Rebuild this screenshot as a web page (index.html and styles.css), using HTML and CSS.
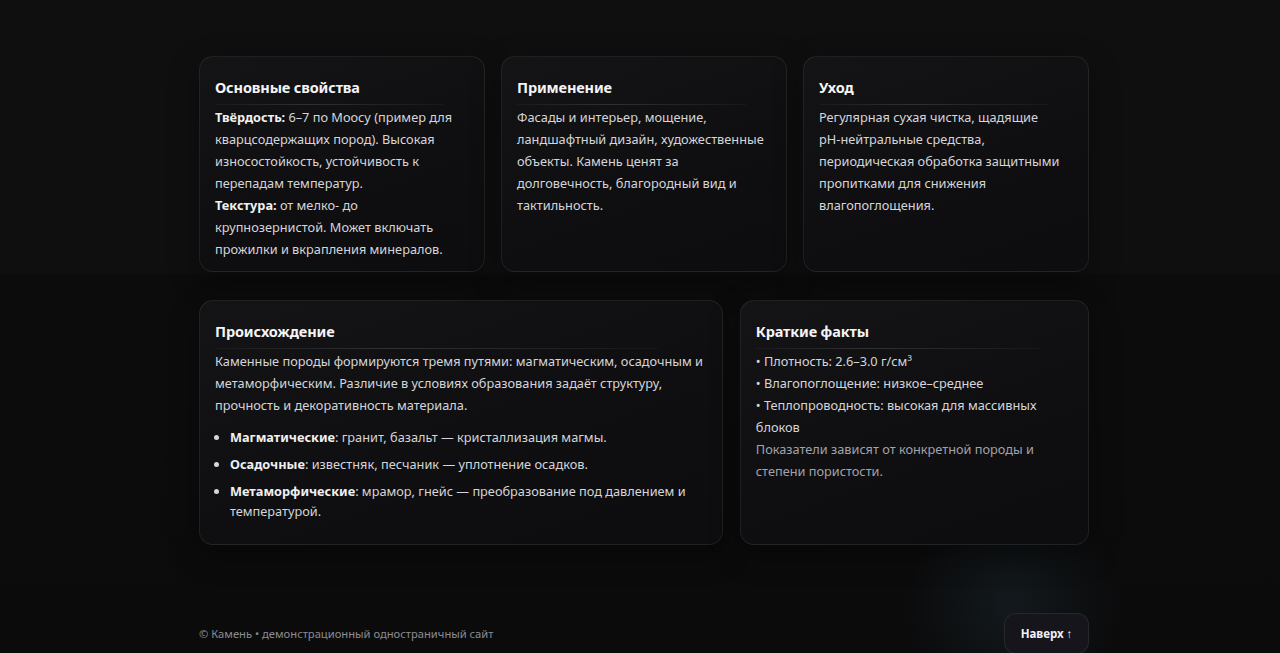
FILE: index.html
```html
<!DOCTYPE html>
<html lang="ru">
<head>
<meta charset="utf-8">
<title>Камень</title>
<link rel="stylesheet" href="styles.css">
</head>
<body>
<div class="page">
  <main class="wrap">
    <section class="grid grid-3">
      <article class="card">
        <h3 class="card-title">Основные свойства</h3>
        <p class="card-text"><b>Твёрдость:</b> 6–7 по Моосу (пример для кварцсодержащих пород). Высокая износостойкость, устойчивость к перепадам температур.<br><b>Текстура:</b> от мелко- до крупнозернистой. Может включать прожилки и вкрапления минералов.</p>
      </article>
      <article class="card">
        <h3 class="card-title">Применение</h3>
        <p class="card-text">Фасады и интерьер, мощение, ландшафтный дизайн, художественные объекты. Камень ценят за долговечность, благородный вид и тактильность.</p>
      </article>
      <article class="card">
        <h3 class="card-title">Уход</h3>
        <p class="card-text">Регулярная сухая чистка, щадящие pH‑нейтральные средства, периодическая обработка защитными пропитками для снижения влагопоглощения.</p>
      </article>
    </section>
    <section class="grid grid-2">
      <article class="card">
        <h3 class="card-title">Происхождение</h3>
        <p class="card-text">Каменные породы формируются тремя путями: магматическим, осадочным и метаморфическим. Различие в условиях образования задаёт структуру, прочность и декоративность материала.</p>
        <ul class="card-list">
          <li><b>Магматические</b>: гранит, базальт — кристаллизация магмы.</li>
          <li><b>Осадочные</b>: известняк, песчаник — уплотнение осадков.</li>
          <li><b>Метаморфические</b>: мрамор, гнейс — преобразование под давлением и температурой.</li>
        </ul>
      </article>
      <article class="card">
        <h3 class="card-title">Краткие факты</h3>
        <p class="card-text">• Плотность: 2.6–3.0 г/см³<br>• Влагопоглощение: низкое–среднее<br>• Теплопроводность: высокая для массивных блоков<br><span class="muted">Показатели зависят от конкретной породы и степени пористости.</span></p>
      </article>
    </section>
  </main>
  <footer class="footer">
    <span class="footer-text">© Камень • демонстрационный одностраничный сайт</span>
    <button class="top-btn" type="button">Наверх ↑</button>
  </footer>
</div>
</body>
</html>
```
FILE: styles.css
```css
* { box-sizing: border-box; }
html, body { margin: 0; padding: 0; }
body {
  background-color: #0b0b0c;
  background-image:
    radial-gradient(circle at 1012px 605px, rgba(55, 95, 110, 0.17), rgba(0,0,0,0) 105px),
    linear-gradient(180deg, #0f0f10 0px, #0f0f10 272px, #0c0c0d 276px, #0b0b0c 100%);
  color: #d7d7db;
  font-family: "Noto Sans", "Open Sans", sans-serif;
  font-size: 12.75px;
  min-height: 653px;
  overflow: hidden;
}
.page {
  padding: 56px 0 0 8px;
}
.wrap {
  width: 890px;
  margin: 0 auto;
  display: flex;
  flex-direction: column;
  gap: 28px;
}
.grid { display: grid; gap: 16px; }
.grid-3 { grid-template-columns: 1fr 1fr 1fr; }
.grid-2 { grid-template-columns: 3fr 2fr; gap: 17px; }
.card {
  background: linear-gradient(160deg, #141416 0%, #0f0f11 55%, #0d0d0f 100%);
  border: 1px solid rgba(255, 255, 255, 0.075);
  border-radius: 14px;
  padding: 17px 15px 11px;
  box-shadow: 0 10px 30px rgba(0, 0, 0, 0.35);
}
.card-title {
  margin: 0 0 1px;
  font-size: 14.5px;
  letter-spacing: -0.15px;
  font-weight: 700;
  line-height: 26px;
  color: #f4f4f6;
}
.card-title::after {
  content: "";
  display: block;
  height: 1px;
  margin-top: 4px;
  width: 90%;
  background: linear-gradient(90deg, rgba(255,255,255,0.03), rgba(255,255,255,0.13) 40%, rgba(255,255,255,0.03));
}
.card-text {
  margin: 0;
  line-height: 22px;
  color: #d5d5da;
}
.card-text b, .card-list b { color: #f0f0f2; font-weight: 700; }
.muted { color: #a2a2aa; }
.card-list {
  margin: 12px 0 12px;
  padding-left: 15px;
  list-style: disc;
  line-height: 19.5px;
  color: #d5d5da;
}
.card-list li { margin-bottom: 7.5px; }
.card-list li:last-child { margin-bottom: 0; }
.footer {
  width: 890px;
  margin: 68px auto 0;
  display: flex;
  align-items: center;
  justify-content: space-between;
}
.footer-text {
  font-size: 11.2px;
  color: #8b8b93;
}
.top-btn {
  font-family: inherit;
  font-size: 11.5px;
  font-weight: 700;
  color: #f2f2f4;
  background: #15151b;
  border: 1px solid rgba(255, 255, 255, 0.08);
  border-radius: 12px;
  padding: 0 15px;
  height: 41px;
  width: 85px;
}
```
